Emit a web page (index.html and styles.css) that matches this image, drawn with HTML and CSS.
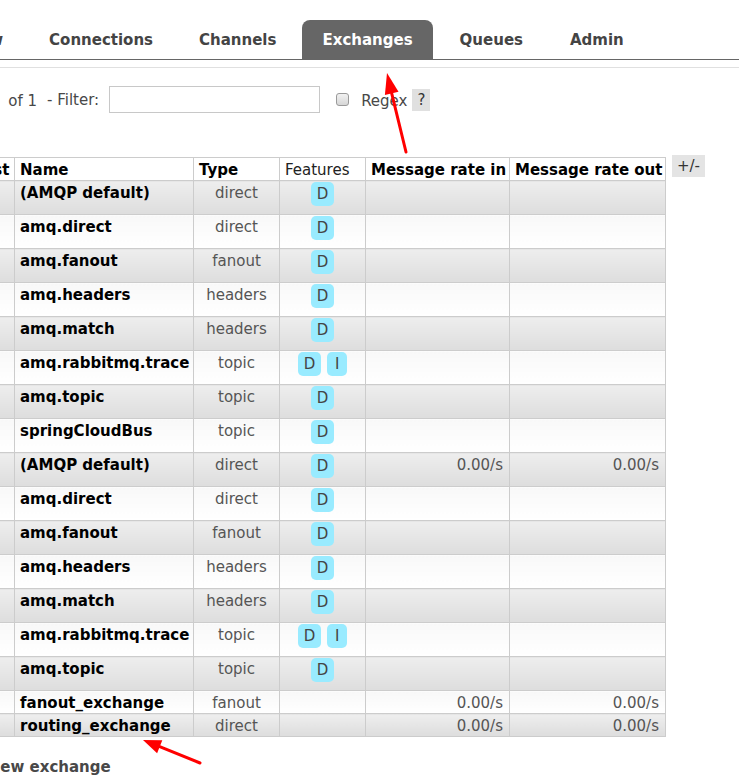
FILE: index.html
```html
<!DOCTYPE html>
<html lang="en">
<head>
  <meta charset="UTF-8" />
  <title>Exchanges - RabbitMQ Management</title>
  <link rel="stylesheet" href="styles.css">
</head>
<body>

<div class="page">
  <ul class="tabs">
    <li><a href="#">Overview</a></li>
    <li><a href="#">Connections</a></li>
    <li><a href="#">Channels</a></li>
    <li><a href="#" class="active">Exchanges</a></li>
    <li><a href="#">Queues</a></li>
    <li><a href="#">Admin</a></li>
  </ul>

  <div class="main">
    <div class="filter-row">
      <span class="pager"><span class="page-num">Page 1</span>of 1</span>
      <span class="filter-label">- Filter:</span>
      <input type="text" class="filter-input">
      <input type="checkbox" class="regex-box">
      <span class="regex-label">Regex</span>
      <span class="help">?</span>
    </div>

    <div class="table-wrap">
      <table class="list">
        <colgroup>
          <col class="c-vhost"><col class="c-name"><col class="c-type"><col class="c-feat"><col class="c-rate-in"><col class="c-rate-out">
        </colgroup>
        <thead>
          <tr>
            <th>Virtual host</th>
            <th>Name</th>
            <th>Type</th>
            <th class="plain">Features</th>
            <th>Message rate in</th>
            <th>Message rate out</th>
          </tr>
        </thead>
        <tbody>
          <tr class="alt1"><td>/</td><td class="name">(AMQP default)</td><td class="type">direct</td><td class="feat"><span class="badge">D</span></td><td class="rate"></td><td class="rate"></td></tr>
          <tr class="alt2"><td>/</td><td class="name">amq.direct</td><td class="type">direct</td><td class="feat"><span class="badge">D</span></td><td class="rate"></td><td class="rate"></td></tr>
          <tr class="alt1"><td>/</td><td class="name">amq.fanout</td><td class="type">fanout</td><td class="feat"><span class="badge">D</span></td><td class="rate"></td><td class="rate"></td></tr>
          <tr class="alt2"><td>/</td><td class="name">amq.headers</td><td class="type">headers</td><td class="feat"><span class="badge">D</span></td><td class="rate"></td><td class="rate"></td></tr>
          <tr class="alt1"><td>/</td><td class="name">amq.match</td><td class="type">headers</td><td class="feat"><span class="badge">D</span></td><td class="rate"></td><td class="rate"></td></tr>
          <tr class="alt2"><td>/</td><td class="name">amq.rabbitmq.trace</td><td class="type">topic</td><td class="feat"><span class="badge">D</span><span class="badge">I</span></td><td class="rate"></td><td class="rate"></td></tr>
          <tr class="alt1"><td>/</td><td class="name">amq.topic</td><td class="type">topic</td><td class="feat"><span class="badge">D</span></td><td class="rate"></td><td class="rate"></td></tr>
          <tr class="alt2"><td>/</td><td class="name">springCloudBus</td><td class="type">topic</td><td class="feat"><span class="badge">D</span></td><td class="rate"></td><td class="rate"></td></tr>
          <tr class="alt1"><td>/leyou</td><td class="name">(AMQP default)</td><td class="type">direct</td><td class="feat"><span class="badge">D</span></td><td class="rate">0.00/s</td><td class="rate">0.00/s</td></tr>
          <tr class="alt2"><td>/leyou</td><td class="name">amq.direct</td><td class="type">direct</td><td class="feat"><span class="badge">D</span></td><td class="rate"></td><td class="rate"></td></tr>
          <tr class="alt1"><td>/leyou</td><td class="name">amq.fanout</td><td class="type">fanout</td><td class="feat"><span class="badge">D</span></td><td class="rate"></td><td class="rate"></td></tr>
          <tr class="alt2"><td>/leyou</td><td class="name">amq.headers</td><td class="type">headers</td><td class="feat"><span class="badge">D</span></td><td class="rate"></td><td class="rate"></td></tr>
          <tr class="alt1"><td>/leyou</td><td class="name">amq.match</td><td class="type">headers</td><td class="feat"><span class="badge">D</span></td><td class="rate"></td><td class="rate"></td></tr>
          <tr class="alt2"><td>/leyou</td><td class="name">amq.rabbitmq.trace</td><td class="type">topic</td><td class="feat"><span class="badge">D</span><span class="badge">I</span></td><td class="rate"></td><td class="rate"></td></tr>
          <tr class="alt1"><td>/leyou</td><td class="name">amq.topic</td><td class="type">topic</td><td class="feat"><span class="badge">D</span></td><td class="rate"></td><td class="rate"></td></tr>
          <tr class="alt2"><td>/leyou</td><td class="name">fanout_exchange</td><td class="type">fanout</td><td class="feat"></td><td class="rate">0.00/s</td><td class="rate">0.00/s</td></tr>
          <tr class="alt1"><td>/leyou</td><td class="name">routing_exchange</td><td class="type">direct</td><td class="feat"></td><td class="rate">0.00/s</td><td class="rate">0.00/s</td></tr>
        </tbody>
      </table>
      <span class="toggle">+/-</span>
    </div>

    <h2 class="add-title">Add a new exchange</h2>
  </div>
</div>

<!-- red annotation arrows drawn over the screenshot -->
<svg class="arrows" width="739" height="777" viewBox="0 0 739 777">
  <line x1="406" y1="152" x2="391.7" y2="93.4" />
  <polygon points="387,73 398.5,91.7 384.9,95.1" />
  <line x1="200" y1="763" x2="159.7" y2="746.7" />
  <polygon points="143,740 162.3,740.2 157.1,753.2" />
</svg>

</body>
</html>
```

FILE: styles.css
```css
* {
  box-sizing: border-box;
}

html, body {
  margin: 0;
  overflow: hidden;
  background: #fff;
}

body {
  font-family: "DejaVu Sans", Verdana, sans-serif;
  font-size: 15px;
  color: #484848;
  position: relative;
  height: 777px;
}

.page {
  margin-left: -96px;
  padding-top: 20px;
}

/* tabs */
.tabs {
  list-style: none;
  display: flex;
  gap: 6px;
  margin: 0;
  padding: 0;
  border-bottom: 1px solid #666;
}

.tabs li:nth-child(n+5) {
  margin-left: 1px;
}

.tabs a {
  display: block;
  padding: 2px 20px 0;
  line-height: 37px;
  font-weight: bold;
  color: #444;
  text-decoration: none;
  border-radius: 8px 8px 0 0;
}

.tabs a.active {
  background: #666;
  color: #fff;
}

.main {
  margin-top: 7px;
  border-top: 1px solid #e0e0e0;
  padding-top: 18px;
}

/* filter */
.filter-row {
  display: flex;
  align-items: center;
  height: 27px;
}

.pager {
  width: 133px;
  display: flex;
  justify-content: flex-end;
  white-space: nowrap;
  padding-top: 3px;
}

.page-num {
  margin-right: 12px;
}

.filter-label {
  margin-left: 10px;
}

.filter-input {
  margin: 0 0 0 10px;
  width: 211px;
  height: 27px;
  border: 1px solid #c8c8c8;
  font: inherit;
}

.regex-box {
  appearance: none;
  margin: 0 0 0 16px;
  width: 13px;
  height: 13px;
  border: 1px solid #9a9a9a;
  border-radius: 3px;
  background: linear-gradient(#f2f2f2, #d6d6d6);
}

.regex-label {
  margin-left: 12px;
  padding-top: 3px;
}

.help {
  margin-left: 5px;
  width: 18px;
  height: 22px;
  line-height: 22px;
  text-align: center;
  background: #e0e0e0;
  color: #333;
}

/* exchange table */
.table-wrap {
  display: flex;
  align-items: flex-start;
  margin-top: 44px;
}

.list {
  border-collapse: collapse;
  table-layout: fixed;
  width: 761px;
}

.c-vhost { width: 110px; }
.c-name { width: 179px; }
.c-type { width: 86px; }
.c-feat { width: 86px; }
.c-rate-in { width: 144px; }
.c-rate-out { width: 156px; }

.list th,
.list td {
  border: 1px solid #ccc;
  padding: 3px 5px 1px;
  line-height: 18px;
  vertical-align: top;
  text-align: left;
  white-space: nowrap;
  overflow: hidden;
}

.list th {
  background: #fff;
  color: #000;
  font-weight: bold;
}

.list th.plain {
  font-weight: normal;
  color: #222;
}

.list tr.alt1 td {
  background: linear-gradient(#eeeeee, #dddddd);
}

.list tr.alt2 td {
  background: linear-gradient(#f8f8f8, #ffffff);
}

.list td.name {
  font-weight: bold;
  color: #000;
}

.list td.type {
  text-align: center;
  color: #555;
}

.list td.feat {
  text-align: center;
  padding: 1px 4px 8px;
}

.list td.rate {
  text-align: right;
  padding-right: 6px;
  color: #555;
}

.badge {
  display: inline-block;
  min-width: 20px;
  height: 24px;
  line-height: 24px;
  padding: 0 6px;
  margin: 0 3px;
  border-radius: 5px;
  background: #99ebff;
  color: #444;
  vertical-align: top;
}

.toggle {
  margin: -2px 0 0 6px;
  padding: 0 5px;
  height: 22px;
  line-height: 22px;
  background: #e4e4e4;
  color: #333;
}

.add-title {
  margin: 21px 0 0 32px;
  font-size: 15px;
  line-height: 18px;
  color: #484848;
}

/* annotation overlay */
.arrows {
  position: absolute;
  left: 0;
  top: 0;
  pointer-events: none;
}

.arrows line {
  stroke: #f00;
  stroke-width: 3;
  stroke-linecap: round;
}

.arrows polygon {
  fill: #f00;
}
```
